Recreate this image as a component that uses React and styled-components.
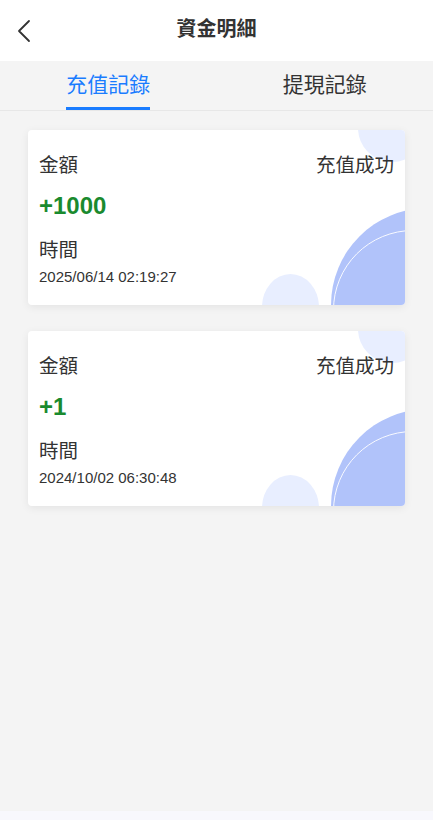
import React, { useState } from "react";
import styled, { createGlobalStyle } from "styled-components";

const GlobalStyle = createGlobalStyle`
  html, body { margin: 0; padding: 0; background: #f4f4f4; }
  body { font-family: "Liberation Sans", "Noto Sans CJK TC", Arial, sans-serif; color: #333; }
  * { box-sizing: border-box; }
`;

const Page = styled.div`
  min-height: 100vh;
  display: flex;
  flex-direction: column;
  background: #f4f4f4;
`;

const Header = styled.header`
  height: 61px;
  background: #fff;
  display: grid;
  grid-template-columns: 61px 1fr 61px;
  align-items: center;
`;

const BackButton = styled.button`
  border: 0;
  background: none;
  padding: 0;
  width: 48px;
  height: 61px;
  display: flex;
  align-items: center;
  justify-content: center;
  cursor: pointer;
`;

const Title = styled.h1`
  margin: 0;
  text-align: center;
  font-size: 20px;
  line-height: 28px;
  font-weight: 700;
  color: #333;
  padding-bottom: 3px;
`;

const Tabs = styled.nav`
  height: 50px;
  display: grid;
  grid-template-columns: 1fr 1fr;
  border-bottom: 1px solid #e7e7e7;
  background: #f4f4f4;
`;

const Tab = styled.button`
  border: 0;
  background: none;
  padding: 0;
  font-family: inherit;
  font-size: 21px;
  line-height: 28px;
  color: ${(p) => (p.$active ? "#1a7cff" : "#333")};
  display: flex;
  justify-content: center;
  cursor: pointer;
`;

const TabLabel = styled.span`
  position: relative;
  height: 49px;
  padding-top: 10px;
  border-bottom: 3px solid ${(p) => (p.$active ? "#1a7cff" : "transparent")};
`;

const List = styled.main`
  flex: 1;
  padding: 19px 28px;
  display: flex;
  flex-direction: column;
  gap: 26px;
`;

const Card = styled.article`
  position: relative;
  overflow: hidden;
  height: 175px;
  background: #fff;
  border-radius: 4px;
  box-shadow: 0 2px 8px rgba(0, 0, 0, 0.07);
  padding: 22px 11px 0;
`;

const Content = styled.div`
  position: relative;
  z-index: 1;
  display: flex;
  flex-direction: column;
`;

const Row = styled.div`
  display: flex;
  justify-content: space-between;
  align-items: center;
`;

const Label = styled.span`
  font-size: 19.5px;
  line-height: 26px;
  color: #333;
`;

const Amount = styled.div`
  margin-top: 13px;
  font-size: 24px;
  line-height: 30px;
  font-weight: 700;
  color: #1a8a2e;
`;

const TimeLabel = styled(Label)`
  margin-top: 16px;
`;

const DateText = styled.div`
  margin-top: 4px;
  font-size: 15px;
  line-height: 20px;
  color: #333;
`;

const Bubble = styled.div`
  position: absolute;
  border-radius: 50%;
  left: ${(p) => p.$left}px;
  top: ${(p) => p.$top}px;
  width: ${(p) => p.$w}px;
  height: ${(p) => p.$h}px;
  background: ${(p) => p.$bg || "transparent"};
  border: ${(p) => p.$border || "none"};
`;

const BottomBar = styled.div`
  height: 9px;
  background: #f8f8fd;
`;

const records = [
  { amount: "+1000", time: "2025/06/14 02:19:27" },
  { amount: "+1", time: "2024/10/02 06:30:48" },
];

function Decor() {
  return (
    <>
      <Bubble $left={330} $top={-36} $w={68} $h={68} $bg="#e8eeff" />
      <Bubble $left={234} $top={144} $w={57} $h={66} $bg="#e8eeff" />
      <Bubble $left={303} $top={78} $w={194} $h={194} $bg="#b1c3fa" />
      <Bubble $left={305} $top={100} $w={160} $h={160} $border="1.5px solid rgba(255,255,255,0.9)" />
    </>
  );
}

export default function App() {
  const [tab, setTab] = useState(0);
  return (
    <Page>
      <GlobalStyle />
      <Header>
        <BackButton aria-label="back">
          <svg width="14" height="24" viewBox="0 0 14 24" fill="none">
            <path d="M12 2 L2 12 L12 22" stroke="#333" strokeWidth="1.8" strokeLinecap="round" strokeLinejoin="round" />
          </svg>
        </BackButton>
        <Title>資金明細</Title>
        <span />
      </Header>
      <Tabs>
        {["充值記錄", "提現記錄"].map((t, i) => (
          <Tab key={t} $active={tab === i} onClick={() => setTab(i)}>
            <TabLabel $active={tab === i}>{t}</TabLabel>
          </Tab>
        ))}
      </Tabs>
      <List>
        {records.map((r) => (
          <Card key={r.time}>
            <Decor />
            <Content>
              <Row>
                <Label>金額</Label>
                <Label>充值成功</Label>
              </Row>
              <Amount>{r.amount}</Amount>
              <TimeLabel>時間</TimeLabel>
              <DateText>{r.time}</DateText>
            </Content>
          </Card>
        ))}
      </List>
      <BottomBar />
    </Page>
  );
}
